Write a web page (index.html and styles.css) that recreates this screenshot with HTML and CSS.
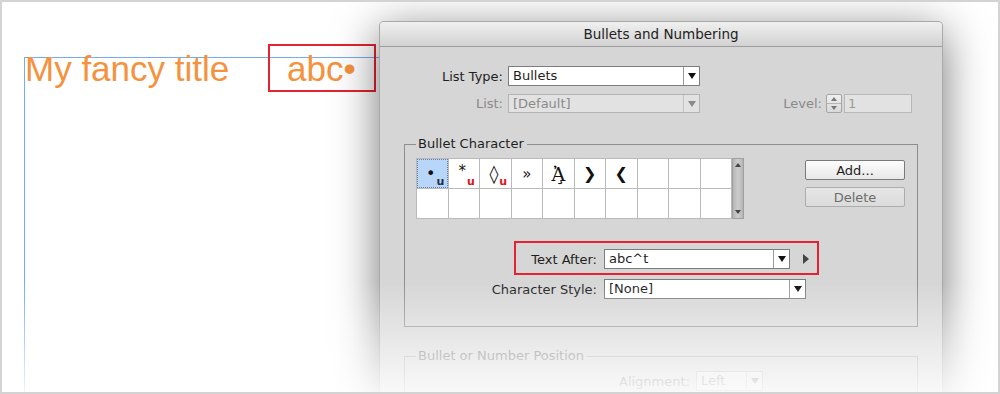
FILE: index.html
```html
<!DOCTYPE html>
<html>
<head>
    <meta charset="utf-8">
    <title>Bullets and Numbering</title>
    <link rel="stylesheet" href="styles.css">
</head>
<body>
<div class="frame">
    <div class="page">
        <div class="text-frame">
            <span class="title">My fancy title</span>
            <span class="callout">abc•</span>
        </div>
    </div>

    <div class="dialog">
        <div class="titlebar">Bullets and Numbering</div>
        <div class="dialog-body">
            <div class="row">
                <span class="label">List Type:</span>
                <div class="select wide"><span class="value">Bullets</span><span class="arrow"></span></div>
            </div>
            <div class="row second">
                <span class="label off">List:</span>
                <div class="select wide off"><span class="value">[Default]</span><span class="arrow"></span></div>
                <div class="level">
                    <span class="off">Level:</span>
                    <span class="stepper"><span class="up"></span><span class="down"></span></span>
                    <span class="field">1</span>
                </div>
            </div>

            <fieldset class="group">
                <legend>Bullet Character</legend>
                <div class="chars">
                    <div class="grid-wrap">
                        <div class="glyphs">
                            <div class="cell picked"><span class="g">•</span><span class="u dark">u</span></div>
                            <div class="cell star"><span class="g">*</span><span class="u">u</span></div>
                            <div class="cell lozenge"><span class="g">◊</span><span class="u">u</span></div>
                            <div class="cell">»</div>
                            <div class="cell serif">Ἀ̧</div>
                            <div class="cell heavy">❯</div>
                            <div class="cell heavy">❮</div>
                            <div class="cell"></div>
                            <div class="cell"></div>
                            <div class="cell"></div>
                            <div class="cell"></div>
                            <div class="cell"></div>
                            <div class="cell"></div>
                            <div class="cell"></div>
                            <div class="cell"></div>
                            <div class="cell"></div>
                            <div class="cell"></div>
                            <div class="cell"></div>
                            <div class="cell"></div>
                            <div class="cell"></div>
                        </div>
                        <div class="scrollbar"><span class="up"></span><span class="down"></span></div>
                    </div>
                    <div class="buttons">
                        <button class="btn">Add...</button>
                        <button class="btn off">Delete</button>
                    </div>
                </div>

                <div class="row after">
                    <span class="label wide-label">Text After:</span>
                    <div class="select combo"><span class="value">abc^t</span><span class="arrow"></span></div>
                    <span class="more"></span>
                    <span class="highlight"></span>
                </div>
                <div class="row style">
                    <span class="label wide-label">Character Style:</span>
                    <div class="select style-select"><span class="value">[None]</span><span class="arrow"></span></div>
                </div>
            </fieldset>

            <fieldset class="group faint">
                <legend>Bullet or Number Position</legend>
                <div class="row align">
                    <span class="label align-label">Alignment:</span>
                    <div class="select small off"><span class="value">Left</span><span class="arrow"></span></div>
                </div>
            </fieldset>
        </div>
    </div>

    <div class="fade"></div>
</div>
</body>
</html>
```

FILE: styles.css
```css
body {
    margin: 0;
    background: #fff;
    font-family: "DejaVu Sans", sans-serif;
}
.frame {
    width: 1000px;
    height: 394px;
    box-sizing: border-box;
    border: 2px solid #d3d3d3;
    background: #fff;
    display: flex;
    align-items: flex-start;
    overflow: hidden;
    position: relative;
}

/* page canvas */
.page {
    flex: 0 0 377px;
    height: 100%;
    box-sizing: border-box;
    padding: 55px 0 0 22px;
}
.text-frame {
    display: flex;
    align-items: flex-start;
    height: 100%;
    border-top: 1px solid #78aaf3;
    border-left: 1px solid #78aaf3;
    font-family: "Liberation Sans", Arial, sans-serif;
    font-size: 35px;
    line-height: 22px;
    color: #f5923e;
}
.callout {
    margin: -14px 3px 0 auto;
    width: 108px;
    height: 48px;
    box-sizing: border-box;
    border: 2px solid #e5222f;
    padding: 12px 0 0 17px;
}

/* dialog */
.dialog {
    flex: 0 0 564px;
    height: 420px;
    margin-top: 19px;
    box-sizing: border-box;
    background: #d6d6d6;
    border: 1px solid #a9a9a9;
    border-bottom: none;
    border-radius: 5px 5px 0 0;
    box-shadow: 0 10px 45px rgba(0, 0, 0, 0.55);
    color: #1e1e1e;
    font-size: 13px;
}
.titlebar {
    height: 24px;
    line-height: 24px;
    text-align: center;
    font-size: 13.5px;
    color: #222;
    background: linear-gradient(#f0f0f0, #d2d2d2);
    border-bottom: 1px solid #9d9d9d;
    border-radius: 4px 4px 0 0;
}
.dialog-body {
    padding: 19px 24px 0 24px;
}
.row {
    display: flex;
    align-items: center;
}
.row.second {
    margin-top: 8px;
}
.label {
    width: 99px;
    margin-right: 5px;
    text-align: right;
    white-space: nowrap;
}
.off {
    color: #8a8a8a;
}

/* popup menus */
.select {
    display: flex;
    box-sizing: border-box;
    height: 20px;
    border: 1px solid #7d7d7d;
    background: #fff;
}
.select .value {
    flex: 1;
    padding-left: 4px;
    line-height: 18px;
}
.select .arrow {
    width: 15px;
    border-left: 1px solid #9a9a9a;
    display: flex;
    align-items: center;
    justify-content: center;
}
.select .arrow::after {
    content: "";
    border-left: 4px solid transparent;
    border-right: 4px solid transparent;
    border-top: 6px solid #111;
}
.select.wide {
    width: 192px;
}
.second .select {
    height: 19px;
}
.select.off {
    background: #e2e2e2;
    border-color: #b3b3b3;
    color: #8a8a8a;
}
.select.off .arrow {
    border-left-color: #c4c4c4;
}
.select.off .arrow::after {
    border-top-color: #8a8a8a;
}

.level {
    margin: 0 6px 0 auto;
    display: flex;
    align-items: center;
}
.stepper {
    margin-left: 4px;
    width: 16px;
    height: 19px;
    box-sizing: border-box;
    border: 1px solid #a5a5a5;
    border-radius: 2px;
    background: linear-gradient(#efefef, #d9d9d9);
    display: flex;
    flex-direction: column;
}
.stepper span,
.scrollbar span {
    flex: 1;
    display: flex;
    align-items: center;
    justify-content: center;
}
.stepper .up {
    border-bottom: 1px solid #b5b5b5;
}
.up::after {
    content: "";
    border-left: 3px solid transparent;
    border-right: 3px solid transparent;
    border-bottom: 4px solid #777;
}
.down::after {
    content: "";
    border-left: 3px solid transparent;
    border-right: 3px solid transparent;
    border-top: 4px solid #777;
}
.field {
    margin-left: 2px;
    width: 68px;
    height: 19px;
    box-sizing: border-box;
    border: 1px solid #b9b9b9;
    background: #e2e2e2;
    color: #9a9a9a;
    padding-left: 3px;
    line-height: 17px;
}

/* groups */
.group {
    margin: 23px 0 0;
    padding: 6px 12px 27px 11px;
    border: 1px solid #8f8f8f;
    min-width: 0;
}
.group legend {
    padding: 0 3px 0 2px;
    line-height: 16px;
}
.chars {
    display: flex;
    align-items: flex-start;
}
.grid-wrap {
    display: flex;
}
.glyphs {
    display: grid;
    grid-template-columns: repeat(10, 30.5px);
    grid-template-rows: 29px 29px;
    gap: 1px;
    background: #bababa;
    border: 1px solid #bababa;
}
.cell {
    display: flex;
    align-items: center;
    justify-content: center;
    background: #fff;
    font-size: 15px;
    color: #111;
}
.cell.picked {
    background: #b8d5fa;
    outline: 1px dotted #6b7f98;
    outline-offset: -1px;
    font-size: 16px;
}
.cell .g {
    line-height: 14px;
}
.cell.star .g {
    align-self: flex-start;
    margin-top: 5px;
}
.cell.lozenge {
    font-size: 18px;
}
.cell.lozenge .g {
    line-height: 18px;
}
.cell.serif {
    font-family: "DejaVu Serif", serif;
    font-size: 19px;
}
.cell.heavy {
    font-size: 16px;
    font-weight: bold;
}
.u {
    align-self: flex-end;
    margin: 0 -6px 2px 1px;
    font-size: 11px;
    line-height: 9px;
    font-weight: bold;
    color: #e3141c;
}
.u.dark {
    color: #243046;
}
.scrollbar {
    width: 12px;
    box-sizing: border-box;
    border: 1px solid #9f9f9f;
    background: linear-gradient(to right, #b5b5b5, #cdcdcd 50%, #b5b5b5);
    display: flex;
    flex-direction: column;
    justify-content: space-between;
}
.scrollbar span {
    flex: 0 0 12px;
}
.scrollbar .up::after {
    border-bottom-color: #444;
}
.scrollbar .down::after {
    border-top-color: #444;
}

.buttons {
    margin-left: auto;
    padding-top: 2px;
    display: flex;
    flex-direction: column;
    gap: 7px;
}
.btn {
    width: 100px;
    height: 20px;
    padding: 0;
    font: 13px "DejaVu Sans", sans-serif;
    color: #1e1e1e;
    border: 1px solid #7a7a7a;
    border-radius: 2px;
    background: linear-gradient(#fdfdfd, #e8e8e8);
}
.btn.off {
    color: #6d6d6d;
    border-color: #adadad;
    background: linear-gradient(#e6e6e6, #dbdbdb);
}

.row.after {
    position: relative;
    margin-top: 30px;
}
.wide-label {
    width: 181px;
    margin-right: 7px;
}
.combo {
    width: 186px;
}
.more {
    margin-left: 13px;
    border-top: 5px solid transparent;
    border-bottom: 5px solid transparent;
    border-left: 6px solid #444;
}
.highlight {
    position: absolute;
    left: 98px;
    top: -8px;
    width: 305px;
    height: 34px;
    box-sizing: border-box;
    border: 2px solid #e5222f;
}
.row.style {
    margin-top: 10px;
}
.style-select {
    width: 202px;
}

.group.faint {
    margin-top: 21px;
    padding-top: 7px;
    border-color: #a8a8a8;
}
.faint legend {
    color: #777;
}
.align-label {
    width: 274px;
    margin-right: 6px;
    color: #777;
}
.select.small {
    width: 67px;
}

.fade {
    position: absolute;
    left: 0;
    right: 0;
    bottom: 0;
    height: 110px;
    background: linear-gradient(rgba(255, 255, 255, 0), rgba(255, 255, 255, 0.85));
}
```
